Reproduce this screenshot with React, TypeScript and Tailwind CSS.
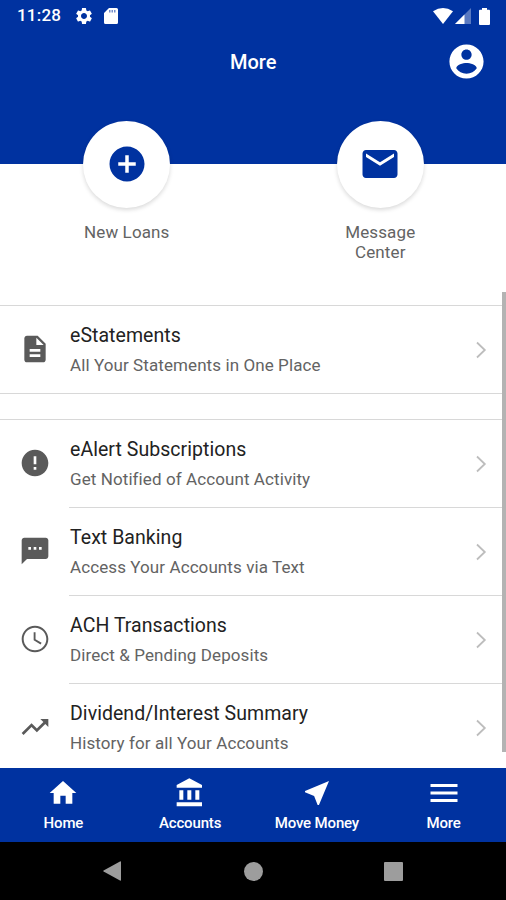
type IconProps = { d: string; size: string };

function Icon({ d, size }: IconProps) {
  return (
    <svg viewBox="0 0 24 24" className={`${size} shrink-0 fill-current`}>
      <path d={d} />
    </svg>
  );
}

const icons = {
  settings:
    "M19.14 12.94c.04-.3.06-.61.06-.94 0-.32-.02-.64-.07-.94l2.03-1.58a.49.49 0 0 0 .12-.61l-1.92-3.32a.488.488 0 0 0-.59-.22l-2.39.96c-.5-.38-1.03-.7-1.62-.94l-.36-2.54a.484.484 0 0 0-.48-.41h-3.84c-.24 0-.43.17-.47.41l-.36 2.54c-.59.24-1.13.57-1.62.94l-2.39-.96c-.22-.08-.47 0-.59.22L2.74 8.87c-.12.21-.08.47.12.61l2.03 1.58c-.05.3-.09.63-.09.94s.02.64.07.94l-2.03 1.58a.49.49 0 0 0-.12.61l1.92 3.32c.12.22.37.29.59.22l2.39-.96c.5.38 1.03.7 1.62.94l.36 2.54c.05.24.24.41.48.41h3.84c.24 0 .44-.17.47-.41l.36-2.54c.59-.24 1.13-.56 1.62-.94l2.39.96c.22.08.47 0 .59-.22l1.92-3.32c.12-.22.07-.47-.12-.61l-2.01-1.58zM12 15.6c-1.98 0-3.6-1.62-3.6-3.6s1.62-3.6 3.6-3.6 3.6 1.62 3.6 3.6-1.62 3.6-3.6 3.6z",
  account:
    "M12 2C6.48 2 2 6.48 2 12s4.48 10 10 10 10-4.48 10-10S17.52 2 12 2zm0 3c1.66 0 3 1.34 3 3s-1.34 3-3 3-3-1.34-3-3 1.34-3 3-3zm0 14.2c-2.5 0-4.71-1.28-6-3.22.03-1.99 4-3.08 6-3.08 1.99 0 5.97 1.09 6 3.08-1.29 1.94-3.5 3.22-6 3.22z",
  add: "M12 2C6.48 2 2 6.48 2 12s4.48 10 10 10 10-4.48 10-10S17.52 2 12 2zm5 11h-4v4h-2v-4H7v-2h4V7h2v4h4v2z",
  mail: "M20 4H4c-1.1 0-1.99.9-1.99 2L2 18c0 1.1.9 2 2 2h16c1.1 0 2-.9 2-2V6c0-1.1-.9-2-2-2zm0 4l-8 5-8-5V6l8 5 8-5v2z",
  document:
    "M14 2H6c-1.1 0-1.99.9-1.99 2L4 20c0 1.1.89 2 1.99 2H18c1.1 0 2-.9 2-2V8l-6-6zm2 16H8v-2h8v2zm0-4H8v-2h8v2zm-3-5V3.5L18.5 9H13z",
  alert:
    "M12 2C6.48 2 2 6.48 2 12s4.48 10 10 10 10-4.48 10-10S17.52 2 12 2zm1 15h-2v-2h2v2zm0-4h-2V7h2v6z",
  sms: "M20 2H4c-1.1 0-1.99.9-1.99 2L2 22l4-4h14c1.1 0 2-.9 2-2V4c0-1.1-.9-2-2-2zM9 11H7V9h2v2zm4 0h-2V9h2v2zm4 0h-2V9h2v2z",
  clock:
    "M11.99 2C6.47 2 2 6.48 2 12s4.47 10 9.99 10C17.52 22 22 17.52 22 12S17.52 2 11.99 2zM12 20.5c-4.7 0-8.5-3.8-8.5-8.5S7.3 3.5 12 3.5s8.5 3.8 8.5 8.5-3.8 8.5-8.5 8.5zM12.4 7H11v6l5.2 3.1.75-1.2-4.55-2.7z",
  trending:
    "M16 6l2.29 2.29-4.88 4.88-4-4L2 16.59 3.41 18l6-6 4 4 6.3-6.29L22 12V6z",
  home: "M10 20v-6h4v6h5v-8h3L12 3 2 12h3v8z",
  bank: "M4 10v7h3v-7H4zm6 0v7h3v-7h-3zM2 22h19v-3H2v3zm14-12v7h3v-7h-3zm-4.5-9L2 6v2h19V6l-9.5-5z",
  send: "M21 3L3 10.53v.98l6.84 2.65L12.48 21h.98L21 3z",
  menu: "M3 18h18v-2H3v2zm0-5h18v-2H3v2zm0-7v2h18V6H3z",
};

type Item = { icon: string; title: string; subtitle: string };

function Row({ item, divided = false }: { item: Item; divided?: boolean }) {
  return (
    <div className={`flex ${divided ? "h-[88px]" : "h-[87px]"}`}>
      <div className={`flex w-[70px] justify-center text-[#5a5a5a] ${divided ? "pt-[28px]" : "pt-[27px]"}`}>
        <Icon d={item.icon} size="size-8" />
      </div>
      <div
        className={`-ml-px flex flex-1 justify-between pl-px pr-[19px] ${divided ? "border-t border-[#d8d8d8]" : ""}`}
      >
        <div className="pt-[15px]">
          <div className="text-[19.5px] leading-[30px] tracking-[0.05px] text-[#222]">{item.title}</div>
          <div className="text-[17px] leading-[29px] tracking-[0.09px] text-[#636363]">{item.subtitle}</div>
        </div>
        <svg viewBox="0 0 12 18" className="mt-[35px] h-[18px] w-3 fill-none stroke-[#bdbdbd] stroke-[1.8]">
          <path d="M2 1.5 9.8 9 2 16.5" />
        </svg>
      </div>
    </div>
  );
}

const statements: Item = {
  icon: icons.document,
  title: "eStatements",
  subtitle: "All Your Statements in One Place",
};

const services: Item[] = [
  { icon: icons.alert, title: "eAlert Subscriptions", subtitle: "Get Notified of Account Activity" },
  { icon: icons.sms, title: "Text Banking", subtitle: "Access Your Accounts via Text" },
  { icon: icons.clock, title: "ACH Transactions", subtitle: "Direct & Pending Deposits" },
  { icon: icons.trending, title: "Dividend/Interest Summary", subtitle: "History for all Your Accounts" },
];

const tabs = [
  { icon: icons.home, label: "Home", size: "size-8" },
  { icon: icons.bank, label: "Accounts", size: "size-8" },
  { icon: icons.send, label: "Move Money", size: "size-8" },
  { icon: icons.menu, label: "More", size: "size-9" },
];

function Shortcut({ icon, children }: { icon: string; children: React.ReactNode }) {
  return (
    <div className="flex flex-1 flex-col items-center">
      <div className="flex size-[87px] items-center justify-center rounded-full bg-white pb-px text-[#0032a0] shadow-[0_2px_4px_rgba(0,0,0,0.15)]">
        <Icon d={icon} size="size-[42px]" />
      </div>
      <div className="mt-[14px] text-center text-[17px] leading-5 tracking-[0.12px] text-[#636363]">{children}</div>
    </div>
  );
}

export default function App() {
  return (
    <div className="relative flex h-[900px] w-[506px] flex-col overflow-hidden bg-white font-[Roboto,'Liberation_Sans',sans-serif]">
      <header className="h-[164px] shrink-0 bg-[#0032a0] text-white">
        <div className="flex h-8 items-center justify-between pl-[17px] pr-[16px]">
          <div className="flex items-center">
            <span className="w-[57px] text-[17px] font-medium tracking-[0.2px]">11:28</span>
            <Icon d={icons.settings} size="size-5" />
            <svg viewBox="0 0 14 16" className="ml-2.5 h-4 w-3.5 fill-current">
              <path d="M5 0h7.5A1.5 1.5 0 0 1 14 1.5v13a1.5 1.5 0 0 1-1.5 1.5h-11A1.5 1.5 0 0 1 0 14.5V5z" />
              <path className="fill-[#0032a0]" opacity="0.55" d="M5 2h1.5v2.5H5zM7.5 2H9v2.5H7.5zM10 2h1.5v2.5H10z" />
            </svg>
          </div>
          <div className="flex items-center">
            <svg viewBox="0 0 20 16" className="h-4 w-5 fill-current">
              <path d="M0 3.3Q10-3.3 20 3.3L10 16z" />
            </svg>
            <svg viewBox="0 0 16 16" className="ml-0.5 h-4 w-4 fill-current">
              <path d="M16 0v16H0z" opacity="0.35" />
              <path d="M9.5 6.5V16H0z" />
            </svg>
            <svg viewBox="0 0 11 17" className="ml-2 h-[17px] w-[11px] fill-current">
              <path d="M3 0h5v1.7h2a1 1 0 0 1 1 1V16a1 1 0 0 1-1 1H1a1 1 0 0 1-1-1V2.7a1 1 0 0 1 1-1h2z" />
            </svg>
          </div>
        </div>
        <div className="grid h-[58px] grid-cols-[1fr_auto_1fr] items-center pr-[19.5px]">
          <span />
          <h1 className="pt-px pl-5 text-[20px] font-medium">More</h1>
          <div className="flex justify-end">
            <Icon d={icons.account} size="size-[41px]" />
          </div>
        </div>
      </header>

      <section className="-mt-[43px] flex h-[184px] w-[507px] shrink-0">
        <Shortcut icon={icons.add}>New Loans</Shortcut>
        <Shortcut icon={icons.mail}>
          Message
          <br />
          Center
        </Shortcut>
      </section>

      <main className="h-[463px] shrink-0 overflow-hidden">
        <div className="border-y border-[#d8d8d8]">
          <Row item={statements} />
        </div>
        <div className="mt-[25px] border-t border-[#d8d8d8]">
          {services.map((item, i) => (
            <Row key={item.title} item={item} divided={i > 0} />
          ))}
        </div>
      </main>

      <nav className="grid h-[74px] w-[507px] shrink-0 grid-cols-4 bg-[#0032a0] text-white">
        {tabs.map((t) => (
          <div key={t.label} className="flex flex-col items-center pt-1.5">
            <div className="flex h-[37px] items-center">
              <Icon d={t.icon} size={t.size} />
            </div>
            <span className="whitespace-nowrap text-[15px] leading-6 font-medium tracking-[-0.15px]">{t.label}</span>
          </div>
        ))}
      </nav>

      <footer className="flex h-[58px] shrink-0 items-center bg-black pl-[103px] text-[#9d9d9d]">
        <svg viewBox="0 0 18 20" className="h-5 w-[18px] fill-current">
          <path d="M17 0.5Q18 0 18 1v18q0 1-1 0.5L0.6 10.6q-.8-.6 0-1.2z" />
        </svg>
        <div className="ml-[123px] size-[19px] rounded-full bg-[#9d9d9d]" />
        <div className="ml-[121px] size-[19px] rounded-[1px] bg-[#9d9d9d]" />
      </footer>

      <div className="absolute right-0 top-[292px] h-[460px] w-1 bg-[#b3b3b3]" />
    </div>
  );
}
